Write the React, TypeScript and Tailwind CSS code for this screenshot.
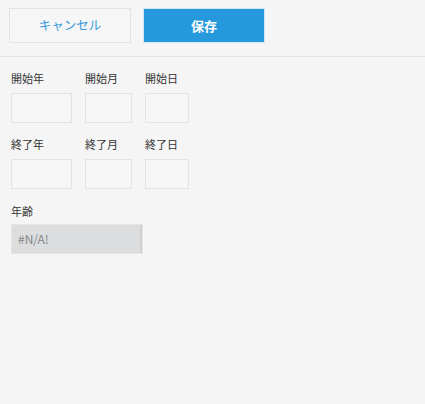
import React from "react";

const font = { fontFamily: '"Noto Sans CJK JP", "Noto Sans", sans-serif' };

function Field({ label, w }: { label: string; w: string }) {
  return (
    <div className="flex flex-col">
      <div className="text-[11px] leading-[16px] text-[#333333] h-[16px]">{label}</div>
      <div className={`mt-[7px] h-[30px] ${w} border border-[#e3e3e3] bg-[#f6f6f6]`} />
    </div>
  );
}

export default function App() {
  return (
    <div className="w-[425px] h-[404px] bg-[#f5f5f5] overflow-hidden" style={font}>
      <div className="h-[57px] border-b border-[#e3e3e3] pl-[9px] pt-[8px] flex gap-[12px]">
        <button className="w-[122px] h-[35px] border border-[#e3e3e3] bg-[#f6f6f6] text-[12.5px] text-[#3498db]">
          キャンセル
        </button>
        <button className="w-[122px] h-[35px] border border-[#cfe6f6] bg-[#2699dd] text-[13px] font-bold text-white">
          保存
        </button>
      </div>
      <div className="pl-[11px] pt-[13px] flex flex-col">
        <div className="flex gap-[13px]">
          <Field label="開始年" w="w-[61px]" />
          <Field label="開始月" w="w-[47px]" />
          <Field label="開始日" w="w-[44px]" />
        </div>
        <div className="flex gap-[13px] mt-[13px]">
          <Field label="終了年" w="w-[61px]" />
          <Field label="終了月" w="w-[47px]" />
          <Field label="終了日" w="w-[44px]" />
        </div>
        <div className="flex flex-col mt-[14px]">
          <div className="text-[11px] leading-[16px] text-[#333333] h-[16px]">年齢</div>
          <div className="mt-[5px] h-[30px] w-[132px] border border-[#e6e6e6] bg-[#dcdddf] flex">
            <div className="flex-1 flex items-center pl-[6px] text-[12px] text-[#888888]">#N/A!</div>
            <div className="w-[2px] bg-[#cfd0d2]" />
          </div>
        </div>
      </div>
    </div>
  );
}
